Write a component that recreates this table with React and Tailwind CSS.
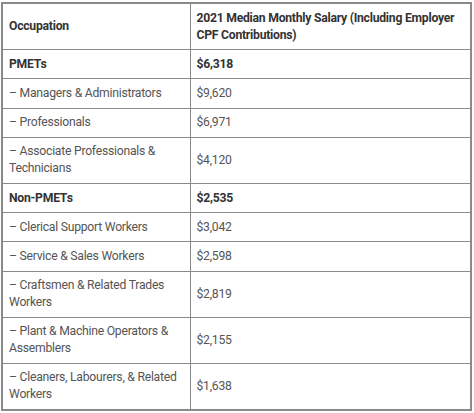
const rows = [
  { name: "PMETs", salary: "$6,318", bold: true },
  { name: "– Managers & Administrators", salary: "$9,620" },
  { name: "– Professionals", salary: "$6,971" },
  { name: "– Associate Professionals & Technicians", salary: "$4,120" },
  { name: "Non-PMETs", salary: "$2,535", bold: true },
  { name: "– Clerical Support Workers", salary: "$3,042" },
  { name: "– Service & Sales Workers", salary: "$2,598" },
  { name: "– Craftsmen & Related Trades Workers", salary: "$2,819" },
  { name: "– Plant & Machine Operators & Assemblers", salary: "$2,155" },
  { name: "– Cleaners, Labourers, & Related Workers", salary: "$1,638" },
];

const cell = "border border-[#8a8a8a] px-[6px] py-[5.6px] text-left align-middle";

export default function App() {
  return (
    <div className="bg-white w-[474px] h-[413px] pt-[2px] pl-[1px] font-['Roboto',sans-serif] text-[12.2px] leading-[17px] tracking-[-0.25px]">
      <table className="w-[471px] border-collapse border-2 border-[#8a8a8a] table-fixed">
        <colgroup>
          <col className="w-[188px]" />
          <col />
        </colgroup>
        <thead>
          <tr>
            <th className={cell + " font-bold text-[#333]"}>Occupation</th>
            <th className={cell + " font-bold text-[#333]"}>
              2021 Median Monthly Salary (Including Employer CPF Contributions)
            </th>
          </tr>
        </thead>
        <tbody>
          {rows.map((r) => (
            <tr key={r.name}>
              <td className={r.bold ? cell + " font-bold text-[#333]" : cell + " text-[#555]"}>
                {r.name}
              </td>
              <td className={r.bold ? cell + " font-bold text-[#333]" : cell + " text-[#555]"}>
                {r.salary}
              </td>
            </tr>
          ))}
        </tbody>
      </table>
    </div>
  );
}
